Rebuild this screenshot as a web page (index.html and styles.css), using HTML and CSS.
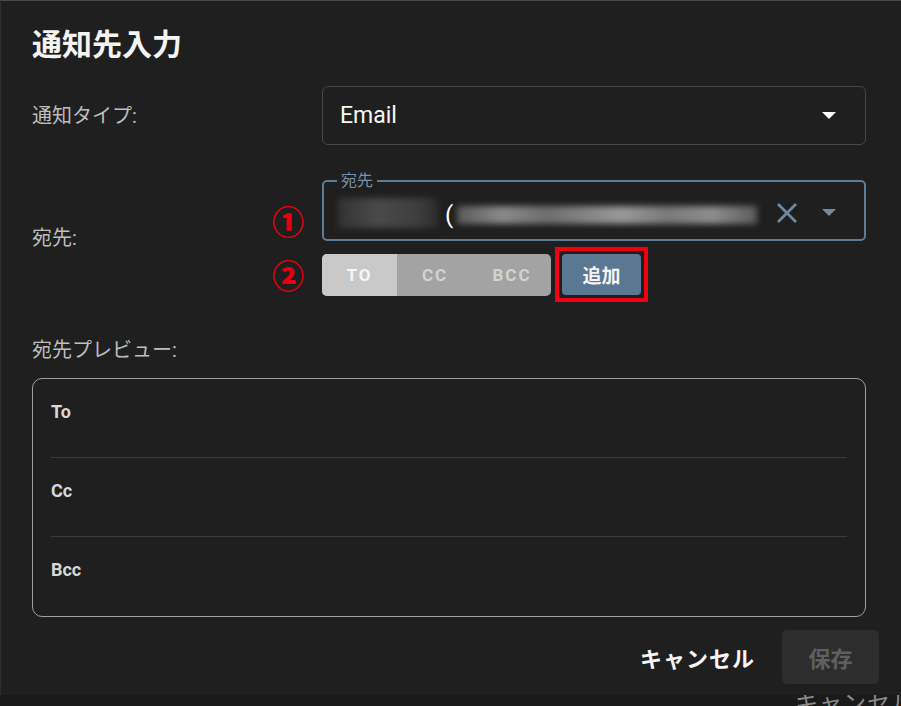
FILE: index.html
```html
<!DOCTYPE html>
<html lang="ja">
<head>
    <meta charset="UTF-8">
    <meta name="viewport" content="width=device-width, initial-scale=1.0">
    <title>通知先入力</title>
    <link rel="stylesheet" href="styles.css">
</head>
<body>
    <div class="dialog">
        <div class="title">通知先入力</div>

        <div class="form-row">
            <div class="label">通知タイプ:</div>
            <div class="select">
                <span class="select-value">Email</span>
                <svg class="caret" width="14" height="8" viewBox="0 0 14 8"><path d="M0 0h14L7 7z" fill="#fff"/></svg>
            </div>
        </div>

        <div class="form-row row-recipient">
            <div class="label">宛先:</div>
            <div class="recipient">
                <fieldset class="outlined">
                    <legend>宛先</legend>
                    <span class="mark mark-1">①</span>
                    <div class="chip-value">
                        <span class="blur blur-name"></span>
                        <span class="paren">(</span>
                        <span class="blur blur-mail"></span>
                    </div>
                    <svg class="clear" width="24" height="24" viewBox="0 0 24 24"><path d="M3 3l18 18M21 3L3 21" stroke="#6f8ba3" stroke-width="2.6" fill="none"/></svg>
                    <svg class="caret" width="14" height="8" viewBox="0 0 14 8"><path d="M0 0h14L7 7z" fill="#6f8ba3"/></svg>
                </fieldset>
                <div class="actions">
                    <span class="mark mark-2">②</span>
                    <div class="toggle">
                        <button class="seg active">TO</button>
                        <button class="seg">CC</button>
                        <button class="seg">BCC</button>
                    </div>
                    <div class="highlight">
                        <button class="add">追加</button>
                    </div>
                </div>
            </div>
        </div>

        <div class="label preview-label">宛先プレビュー:</div>
        <div class="preview">
            <div class="preview-row">To</div>
            <div class="preview-row">Cc</div>
            <div class="preview-row">Bcc</div>
        </div>

        <div class="footer">
            <button class="cancel">キャンセル</button>
            <button class="save" disabled>保存</button>
        </div>
    </div>
    <div class="under">
        <span class="under-text">キャンセル</span>
    </div>
</body>
</html>
```

FILE: styles.css
```css
body {
    margin: 0;
    background-color: #1a1a1a;
    font-family: Roboto, 'Noto Sans CJK JP', sans-serif;
    color: #eee;
    overflow: hidden;
}
.dialog {
    height: 695px;
    box-sizing: border-box;
    background-color: #1f1f1f;
    border-top: 1px solid #474747;
    border-left: 1px solid #2e2e2e;
    padding: 22px 35px 0 31px;
}
.title {
    font-size: 30px;
    font-weight: 700;
    line-height: 44px;
    color: #f4f4f4;
    margin-bottom: 19px;
}
.form-row {
    display: flex;
    align-items: center;
}
.label {
    width: 290px;
    flex-shrink: 0;
    font-size: 20px;
    color: #bdbdbd;
    line-height: 26px;
}
.select {
    flex: 1;
    height: 59px;
    box-sizing: border-box;
    border: 1px solid #474747;
    border-radius: 6px;
    display: flex;
    align-items: center;
    padding: 0 29px 0 17px;
}
.select-value {
    flex: 1;
    font-size: 23px;
    color: #f6f6f6;
}
.row-recipient {
    margin-top: 28px;
}
.recipient {
    flex: 1;
    display: flex;
    flex-direction: column;
    gap: 6px;
}
.outlined {
    position: relative;
    margin: 0;
    height: 68px;
    box-sizing: border-box;
    border: 2px solid #5d7d96;
    border-radius: 5px;
    padding: 0 28px 0 14px;
    display: flex;
    align-items: center;
}
.outlined legend {
    font-size: 16px;
    line-height: 16px;
    color: #7791a8;
    padding: 0 4px;
    margin-left: -1px;
}
.chip-value {
    flex: 1;
    display: flex;
    align-items: center;
    margin-top: 8px;
}
.blur {
    display: block;
    filter: blur(3px);
}
.blur-name {
    width: 100px;
    height: 30px;
    background: linear-gradient(90deg, #333 0%, #4a4a4a 40%, #3e3e3e 80%, #2c2c2c 100%);
}
.paren {
    font-size: 24px;
    color: #fff;
    margin: 4px 4px 0 7px;
}
.blur-mail {
    width: 300px;
    height: 18px;
    margin-top: 4px;
    background: linear-gradient(90deg, #5a5a5a 0%, #8a8a8a 15%, #6e6e6e 30%, #999 55%, #7a7a7a 70%, #8e8e8e 85%, #5c5c5c 100%);
}
.clear {
    margin: 8px 23px 0 0;
}
.outlined .caret {
    margin-top: 8px;
}
.mark {
    position: absolute;
    color: #e60012;
    font-size: 32px;
    line-height: 32px;
    font-weight: 900;
    font-family: 'Noto Sans CJK JP', sans-serif;
}
.mark-1 {
    left: -52px;
    top: 15px;
}
.mark-2 {
    left: -50px;
    top: 11px;
}
.actions {
    position: relative;
    display: flex;
    align-items: center;
    gap: 4px;
}
.toggle {
    display: flex;
    height: 42px;
    border-radius: 5px;
    overflow: hidden;
    background-color: #a3a3a3;
}
button {
    font-family: inherit;
    border: none;
    cursor: pointer;
}
.seg {
    background: transparent;
    color: #d2d2d2;
    font-size: 17px;
    font-weight: 700;
    letter-spacing: 2px;
    padding: 0;
    width: 76px;
}
.seg:last-child {
    width: 78px;
}
.seg.active {
    width: 75px;
    background-color: #c9c9c9;
    color: #f6f6f6;
}
.highlight {
    border: 4px solid #f00010;
    padding: 3px;
}
.add {
    display: block;
    width: 79px;
    height: 41px;
    border-radius: 4px;
    background-color: #5b7892;
    color: #f4f4f4;
    font-size: 19px;
    font-weight: 700;
}
.preview-label {
    margin-top: 35px;
    width: auto;
}
.preview {
    margin-top: 15px;
    border: 1.5px solid #a0a0a0;
    border-radius: 10px;
    padding: 0 18px;
}
.preview-row {
    height: 79px;
    box-sizing: border-box;
    padding-top: 22px;
    line-height: 22px;
    font-size: 18px;
    font-weight: 700;
    color: #d8d8d8;
    border-bottom: 1px solid #3a3a3a;
}
.preview-row:last-child {
    border-bottom: none;
}
.footer {
    display: flex;
    justify-content: flex-end;
    align-items: center;
    gap: 27px;
    margin: 13px -13px 0 0;
}
.cancel {
    background: transparent;
    color: #f6f6f6;
    font-size: 22px;
    font-weight: 700;
    padding: 0;
    letter-spacing: 1px;
}
.save {
    width: 97px;
    height: 54px;
    border-radius: 5px;
    background-color: #2d2d2d;
    color: #5f5f5f;
    font-size: 22px;
    font-weight: 700;
    cursor: default;
}
.under {
    height: 11px;
    overflow: hidden;
    display: flex;
    justify-content: flex-end;
}
.under-text {
    font-size: 23px;
    line-height: 24px;
    margin-top: -3px;
    margin-right: -14px;
    color: #8a8a8a;
    letter-spacing: 1px;
}
```
